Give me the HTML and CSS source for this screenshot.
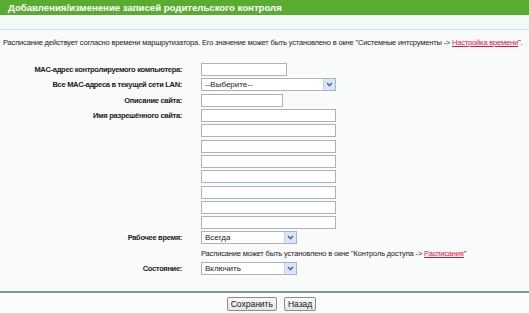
FILE: index.html
```html
<!DOCTYPE html>
<html>
<head>
<meta charset="utf-8">
<link rel="stylesheet" href="styles.css">
</head>
<body>
<div class="title">Добавления/изменение записей родительского контроля</div>
<div class="band"></div>
<p class="intro">Расписание действует согласно времени маршрутизатора. Его значение может быть установлено в окне "Системные интсрументы -&gt; <a href="#">Настройка времени</a>".</p>
<div class="form">
  <div class="lbl">MAC-адрес контролируемого компьютера:</div>
  <div class="fld"><span class="inp w85"></span></div>
  <div class="lbl">Все MAC-адреса в текущей сети LAN:</div>
  <div class="fld"><span class="sel w134"><span class="val">--Выберите--</span><span class="arr"><svg width="9" height="9" viewBox="0 0 9 9"><path d="M2 3 L4.5 5.5 L7 3" fill="none" stroke="#4a6fa5" stroke-width="1.6"/></svg></span></span></div>
  <div class="lbl">Описание сайта:</div>
  <div class="fld"><span class="inp w81"></span></div>
  <div class="lbl">Имя разрешённого сайта:</div>
  <div class="fld"><span class="inp w134"></span></div>
  <div class="lbl"></div><div class="fld"><span class="inp w134"></span></div>
  <div class="lbl"></div><div class="fld"><span class="inp w134"></span></div>
  <div class="lbl"></div><div class="fld"><span class="inp w134"></span></div>
  <div class="lbl"></div><div class="fld"><span class="inp w134"></span></div>
  <div class="lbl"></div><div class="fld"><span class="inp w134"></span></div>
  <div class="lbl"></div><div class="fld"><span class="inp w134"></span></div>
  <div class="lbl"></div><div class="fld"><span class="inp w134"></span></div>
  <div class="lbl">Рабочее время:</div>
  <div class="fld"><span class="sel w95"><span class="val">Всегда</span><span class="arr"><svg width="9" height="9" viewBox="0 0 9 9"><path d="M2 3 L4.5 5.5 L7 3" fill="none" stroke="#4a6fa5" stroke-width="1.6"/></svg></span></span></div>
  <div class="lbl"></div>
  <div class="fld note"><span>Расписание может быть установлено в окне "Контроль доступа -&gt; <a href="#">Расписания</a>"</span></div>
  <div class="lbl">Состояние:</div>
  <div class="fld"><span class="sel w95"><span class="val">Включить</span><span class="arr"><svg width="9" height="9" viewBox="0 0 9 9"><path d="M2 3 L4.5 5.5 L7 3" fill="none" stroke="#4a6fa5" stroke-width="1.6"/></svg></span></span></div>
</div>
<div class="footer">
  <button class="btn">Сохранить</button>
  <button class="btn">Назад</button>
</div>
</body>
</html>
```
FILE: styles.css
```css
html, body {
  margin: 0;
  padding: 0;
  background: #f9fbfb;
  font-family: "Liberation Sans", Arial, sans-serif;
  color: #1a1a1a;
}
.title {
  height: 15px;
  background: #5aac31;
  color: #fff;
  font-weight: bold;
  font-size: 9.6px;
  line-height: 15px;
  padding-left: 8px;
}
.band {
  height: 14px;
  background: #f3f9f7;
  border-bottom: 1px solid #d5e2dc;
}
.intro {
  margin: 0;
  padding: 8px 0 0 3px;
  height: 32px;
  box-sizing: border-box;
  font-size: 7.5px;
  letter-spacing: -0.17px;
  line-height: 10px;
  white-space: nowrap;
}
a {
  color: #e2103c;
  text-decoration: underline;
}
.form {
  display: grid;
  grid-template-columns: 182px 1fr;
  column-gap: 19px;
  grid-auto-rows: 15.3px;
  align-items: center;
}
.lbl {
  text-align: right;
  font-weight: bold;
  font-size: 7.5px;
  letter-spacing: -0.3px;
  white-space: nowrap;
}
.fld {
  display: flex;
  align-items: center;
}
.inp {
  display: block;
  height: 13px;
  box-sizing: border-box;
  background: #fff;
  border: 1px solid #a9b3bd;
}
.w85 { width: 86px; }
.w81 { width: 82px; }
.w134 { width: 135px; }
.w95 { width: 96px; }
.sel {
  display: flex;
  align-items: stretch;
  height: 13px;
  box-sizing: border-box;
  background: #fff;
  border: 1px solid #a9b3bd;
  font-size: 8px;
}
.val {
  flex: 1;
  padding-left: 3px;
  line-height: 11px;
}
.arr {
  width: 11px;
  background: #dbe5f4;
  border-left: 1px solid #c7d3e6;
  display: flex;
  align-items: center;
  justify-content: center;
}
.note {
  font-size: 7.5px;
  letter-spacing: -0.15px;
  white-space: nowrap;
}
.footer {
  margin-top: 15px;
  border-top: 2px solid #7f9b8e;
  background: #fbfbfb;
  height: 22px;
  display: flex;
  justify-content: center;
  align-items: flex-start;
  gap: 7px;
  padding: 4px 0 0 14px;
  box-sizing: border-box;
}
.btn {
  font-family: "Liberation Sans", Arial, sans-serif;
  font-size: 8.5px;
  height: 14px;
  padding: 0 3px;
  line-height: 12px;
  background: linear-gradient(#fafafa, #e6e6e6);
  border: 1px solid #8c8c8c;
  border-radius: 2px;
  color: #111;
}
```
